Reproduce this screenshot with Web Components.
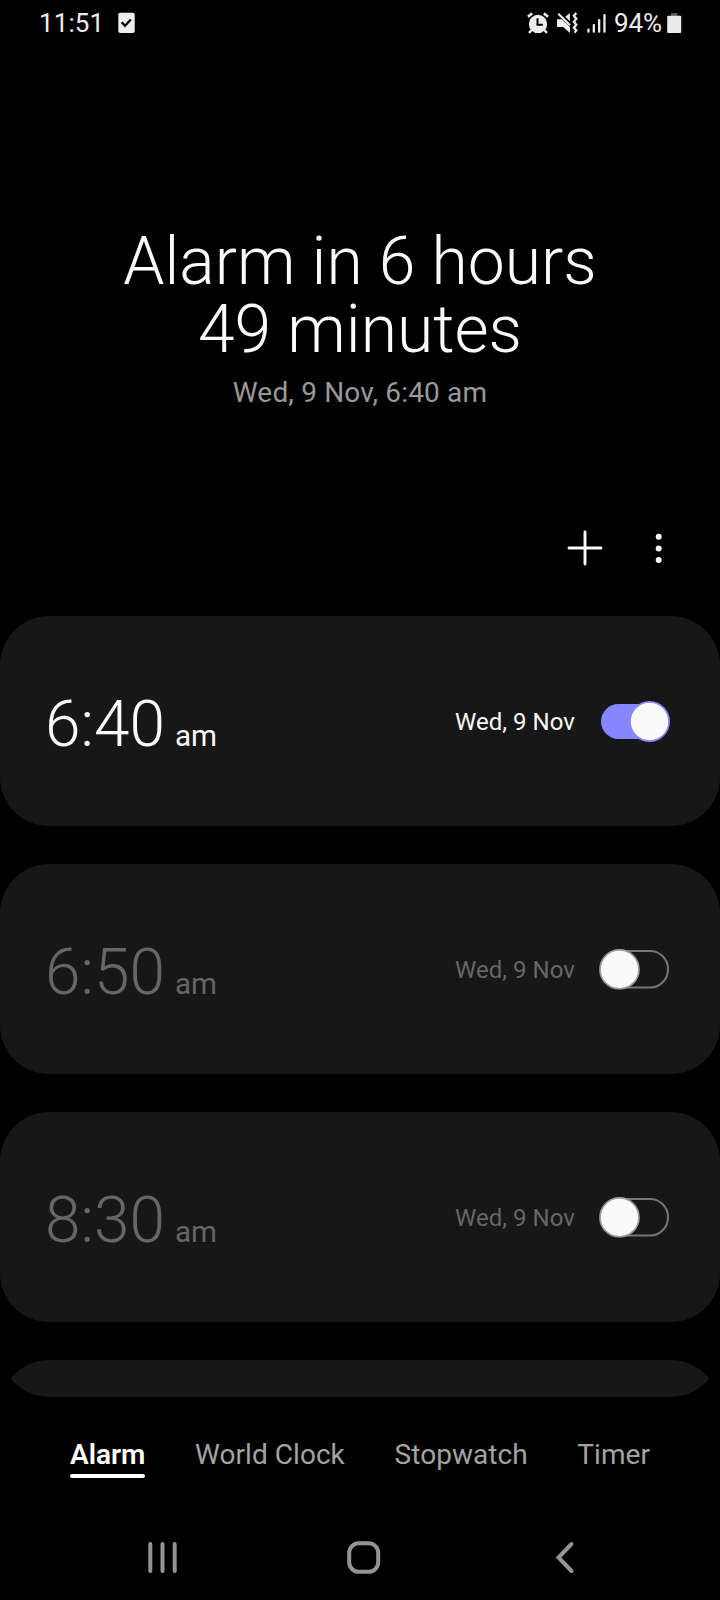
<!DOCTYPE html>
<html lang="en">
<head>
<meta charset="utf-8">
<title>Clock</title>
<style>
html,body{margin:0;background:#000}
body{font-family:Roboto,"Liberation Sans",sans-serif;color:#fafafa}
</style>
</head>
<body>
<clock-app></clock-app>
<script>
function define(name, html, setup) {
  const t = document.createElement('template');
  t.innerHTML = html;
  customElements.define(name, class extends HTMLElement {
    constructor() {
      super();
      this.attachShadow({mode: 'open'}).appendChild(t.content.cloneNode(true));
    }
    connectedCallback() { if (setup) setup(this, this.shadowRoot); }
  });
}

define('status-bar', `
<style>
:host{display:flex;align-items:center;justify-content:space-between;height:46px;box-sizing:border-box;padding:0 38px 0 39px;color:#ececec;font-size:26px;line-height:46px}
div{display:flex;align-items:center;height:46px}
span{display:block}
.clock{width:66px;letter-spacing:.1px}
svg{display:block;flex:none}
.check{margin-left:13px}
.mute{margin-left:8px}
.signal{margin-left:9px}
.pct{margin-left:8px;letter-spacing:-.1px}
.batt{margin-left:5px}
</style>
<div>
  <span class="clock">11:51</span>
  <svg class="check" width="17" height="22" viewBox="0 0 17 22"><rect x=".3" y=".8" width="16.4" height="20.2" rx="1.8" fill="#ececec"/><path d="M3.7 10.2l3.3 3.5 5.8-6.2" fill="none" stroke="#000" stroke-width="2.3"/></svg>
</div>
<div>
  <svg width="22" height="22" viewBox="0 0 22 22" fill="none" stroke="#ececec">
    <circle cx="11" cy="11.9" r="9.200" fill="#ececec" stroke="none"/>
    <path d="M.9 4.7L5.2 1.4M21.1 4.7L16.8 1.4" stroke-width="2.6"/>
    <path d="M4.8 18L2 20.8M17.2 18l2.8 2.8" stroke-width="2.4"/>
    <path d="M10.500 6.300v6.500h5.300" stroke="#000" stroke-width="2"/>
  </svg>
  <svg class="mute" width="21" height="22" viewBox="0 0 21 22" fill="#ececec">
    <path d="M0 7.200h4.700l8.300 7.900v6L6.200 15H0z"/>
    <path d="M8.300 4.800L12.900 1v8.300z"/>
    <path d="M1.300 1.800l11.700 11.400" fill="none" stroke="#ececec" stroke-width="2.300"/>
    <path d="M19.300 1l-2.400 2.800 2.400 3-2.400 3 2.400 3-2.400 3 2.400 2.600-1.700 2.200" fill="none" stroke="#ececec" stroke-width="2.300"/>
  </svg>
  <svg class="signal" width="19" height="22" viewBox="0 0 19 22" fill="#ececec"><rect x=".3" y="16.500" width="2.300" height="4.300" rx="1"/><rect x="5.700" y="12" width="2.300" height="8.800" rx="1"/><rect x="11" y="7" width="2.300" height="13.800" rx="1"/><rect x="16.300" y="2" width="2.300" height="18.800" rx="1"/></svg>
  <span class="pct">94%</span>
  <svg class="batt" width="15" height="22" viewBox="0 0 15 22"><rect x="4" y="1" width="6.500" height="4" fill="#555"/><rect x=".2" y="3.800" width="14" height="17.200" rx="1" fill="#ececec"/></svg>
</div>`);

define('alarm-summary', `
<style>
:host{display:block;text-align:center;padding-top:182px;height:248px}
h1{margin:0;font-weight:300;font-size:66px;line-height:68.400px}
p{margin:11px 0 0;font-size:28px;line-height:34px;letter-spacing:.17px;color:#999}
h1 ::slotted(*){display:block}
</style>
<h1><slot></slot></h1><p><slot name="when"></slot></p>`);

define('tool-bar', `
<style>
:host{display:flex;justify-content:flex-end;align-items:center;gap:38px;height:140px;box-sizing:border-box;padding:4px 43px 0 0}
svg{display:block}
</style>
<svg width="36" height="36" viewBox="0 0 36 36" stroke="#fafafa" stroke-width="2.900" stroke-linecap="round"><path d="M18 2v32M2 18h32"/></svg>
<svg width="36" height="36" viewBox="0 0 36 36" fill="#fafafa"><circle cx="17.700" cy="6.700" r="3"/><circle cx="17.700" cy="18.400" r="3"/><circle cx="17.700" cy="30" r="3"/></svg>`);

define('toggle-switch', `
<style>
:host{display:block;width:74px;height:42px}
svg{display:none}
:host([on]) .on,:host(:not([on])) .off{display:block}
</style>
<svg class="on" width="74" height="42" viewBox="0 0 74 42"><rect x="4" y="4" width="66" height="35" rx="17.500" fill="#8686fe"/><circle cx="52.500" cy="21.500" r="20.500" fill="#8686fe"/><circle cx="52.500" cy="21.500" r="18.700" fill="#fafafa"/></svg>
<svg class="off" width="74" height="42" viewBox="0 0 74 42"><rect x="6" y="3" width="65" height="36.500" rx="18" fill="none" stroke="#777" stroke-width="2"/><circle cx="22.500" cy="21.400" r="19.500" fill="#fafafa" stroke="#999" stroke-width="1.700"/></svg>`);

define('alarm-card', `
<style>
:host{display:flex;align-items:center;flex:none;height:210px;box-sizing:border-box;padding:0 49px 0 45px;border-radius:49px;background:#171717;color:#666}
:host([on]){color:#fafafa}
.time{display:flex;align-items:baseline;gap:10px;font-weight:300;font-size:64px;line-height:76px;margin-top:18px}
.ap{font-weight:400;font-size:29.600px}
.date{margin-left:auto;margin-right:22px;font-size:24px;line-height:30px;letter-spacing:.05px;margin-top:2px}
</style>
<div class="time"><span class="t"></span><span class="ap"></span></div>
<div class="date"><slot></slot></div>
<toggle-switch></toggle-switch>`, (el, r) => {
  r.querySelector('.t').textContent = el.getAttribute('time') || '';
  r.querySelector('.ap').textContent = el.getAttribute('period') || '';
  r.querySelector('toggle-switch').toggleAttribute('on', el.hasAttribute('on'));
});

define('alarm-list', `
<style>
:host{display:flex;flex-direction:column;gap:38px;height:781px;overflow:hidden;border-radius:0 0 49px 49px}
</style><slot></slot>`);

define('tab-item', `
<style>
:host{display:block;font-size:28px;line-height:34px;letter-spacing:.05px;color:#a3a3a3;white-space:nowrap}
:host([active]){font-weight:600;letter-spacing:0;color:#fff}
i{display:block;height:4px;border-radius:2px;margin-top:2px}
:host([active]) i{background:#fff}
</style><slot></slot><i></i>`);

define('tab-bar', `
<style>
:host{display:flex;justify-content:space-between;height:104px;box-sizing:border-box;padding:41px 70px 0}
</style><slot></slot>`);

define('nav-bar', `
<style>
:host{display:grid;grid-template-columns:36px 36px 36px;justify-content:space-between;padding:38px 137px 0 144px;height:99px;box-sizing:border-box}
svg{display:block;fill:none;stroke:#949494;stroke-width:4;stroke-linecap:round}
</style>
<svg width="36" height="36" viewBox="0 0 36 36"><path d="M6.300 5v27M18.500 5v27M30.700 5v27"/></svg>
<svg width="36" height="36" viewBox="0 0 36 36"><rect x="3.200" y="4.300" width="29" height="28.500" rx="9.500"/></svg>
<svg width="36" height="36" viewBox="0 0 36 36"><path d="M24.500 5L11.500 18.500l13 13.500"/></svg>`);

define('clock-app', `
<style>
:host{display:flex;flex-direction:column;width:720px;height:1600px;background:#000;overflow:hidden}
</style>
<status-bar></status-bar>
<alarm-summary><span>Alarm in 6 hours</span><span>49 minutes</span><span slot="when">Wed, 9 Nov, 6:40 am</span></alarm-summary>
<tool-bar></tool-bar>
<alarm-list>
  <alarm-card time="6:40" period="am" on>Wed, 9 Nov</alarm-card>
  <alarm-card time="6:50" period="am">Wed, 9 Nov</alarm-card>
  <alarm-card time="8:30" period="am">Wed, 9 Nov</alarm-card>
  <alarm-card></alarm-card>
</alarm-list>
<tab-bar><tab-item active>Alarm</tab-item><tab-item>World Clock</tab-item><tab-item>Stopwatch</tab-item><tab-item>Timer</tab-item></tab-bar>
<nav-bar></nav-bar>`);
</script>
</body>
</html>
